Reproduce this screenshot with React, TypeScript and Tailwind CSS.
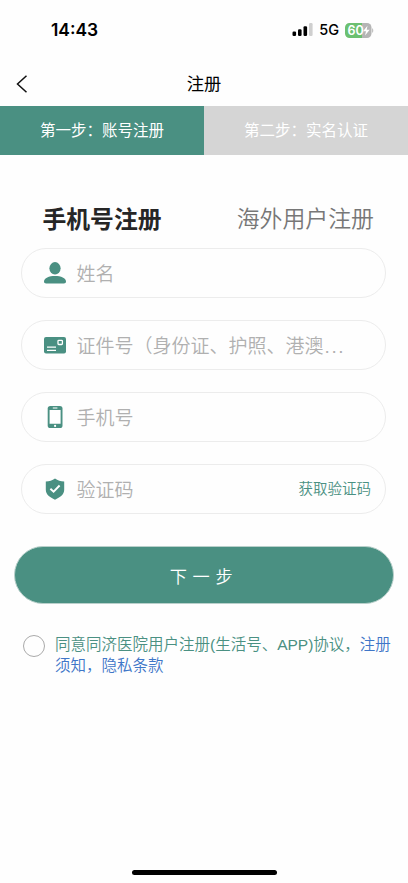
import React from 'react';

const UserIcon = () => (
  <svg width="22" height="22" viewBox="0 0 22 22" fill="#4a9082">
    <ellipse cx="11" cy="6.300" rx="5.600" ry="6.200" />
    <path d="M0 19.600C0 16 5 14 11 14s11 2 11 5.600c0 1.300-.7 2-2.200 2H2.200C.7 21.600 0 20.900 0 19.600Z" />
  </svg>
);

const CardIcon = () => (
  <svg width="22" height="22" viewBox="0 0 22 22" fill="none">
    <rect y="3" width="22" height="16.400" rx="2" fill="#4a9082" />
    <rect x="14" y="6.300" width="4.400" height="4.200" rx=".8" stroke="#fff" strokeWidth="1.300" />
    <path d="M3 13.200h9M3 16.300h9" stroke="#fff" strokeWidth="1.200" />
  </svg>
);

const PhoneIcon = () => (
  <svg width="22" height="22" viewBox="0 0 22 22" fill="none">
    <rect x="3.700" width="14.800" height="22" rx="2.600" fill="#4a9082" />
    <path d="M5.600 3.900h11v13.900h-11zM8.800 1.500h4.600v.9H8.800z" fill="#fff" />
    <circle cx="11.100" cy="19.900" r="1.100" fill="#fff" />
  </svg>
);

const ShieldIcon = () => (
  <svg width="22" height="22" viewBox="0 0 22 22" fill="none">
    <path
      d="M11 .4c2.700 1.900 5.600 2.900 9.200 3.100v8.300c0 4.800-4.200 7.700-9.200 9.900-5-2.200-9.200-5.100-9.200-9.900V3.500C5.400 3.300 8.300 2.300 11 .4Z"
      fill="#4a9082"
    />
    <path d="M6.400 10.700l3.200 3 6-6.200" stroke="#fff" strokeWidth="1.900" />
  </svg>
);

const fields = [
  { icon: <UserIcon />, label: '姓名' },
  { icon: <CardIcon />, label: '证件号（身份证、护照、港澳', more: true },
  { icon: <PhoneIcon />, label: '手机号' },
  { icon: <ShieldIcon />, label: '验证码', action: '获取验证码' },
];

function StatusBar() {
  return (
    <div className="flex h-[60px] items-center justify-between pr-[34px] pl-[51px] font-['Inter'] text-black">
      <span className="text-[17.400px] font-semibold">14:43</span>
      <div className="flex items-center">
        <svg width="21" height="14" viewBox="0 0 21 14">
          <rect x=".5" y="8.500" width="3.600" height="4.500" rx="1.200" />
          <rect x="6" y="6.300" width="3.600" height="6.700" rx="1.200" />
          <rect x="11.500" y="3.300" width="3.600" height="9.700" rx="1.200" />
          <rect x="17" y="0" width="3.600" height="13" rx="1.200" fill="#cfcfcf" />
        </svg>
        <span className="ml-[6px] text-[14.500px] font-medium">5G</span>
        <svg className="ml-[6px]" width="29" height="15" viewBox="0 0 29 15">
          <path d="M4.500 0H17v15H4.500A4.500 4.500 0 0 1 0 10.500v-6A4.500 4.500 0 0 1 4.500 0Z" fill="#6cc070" />
          <path d="M17 0h5a4.500 4.500 0 0 1 4.500 4.500v6A4.500 4.500 0 0 1 22 15h-5z" fill="#b5b5b5" />
          <path d="M27.200 5.200c1.400.6 1.400 4 0 4.600z" fill="#b5b5b5" />
          <text x="2.500" y="11.800" fill="#fff" fontSize="12.500" fontWeight="600">60</text>
          <path d="M22.500 2.800l-4.500 5.400h3l-1 4.200 4.700-5.600h-3z" fill="#fff" />
        </svg>
      </div>
    </div>
  );
}

export default function App() {
  return (
    <div className="flex h-[883px] w-[408px] flex-col bg-[#fefefe] font-['Liberation_Sans','Noto_Sans_CJK_SC',sans-serif]">
      <StatusBar />

      <header className="grid h-[46px] grid-cols-3 items-center px-4 pt-[2px]">
        <svg width="12" height="18" viewBox="0 0 12 18" fill="none" stroke="#111" strokeWidth="1.500">
          <path d="M10.500 .7L1.500 9l9 8.300" />
        </svg>
        <h1 className="pt-[2px] text-center text-[17.300px] text-black">注册</h1>
      </header>

      <div className="grid h-[49px] grid-cols-2 text-center text-[15.500px] leading-[50px] text-white">
        <div className="h-[49px] bg-[#4a9082]">第一步：账号注册</div>
        <div className="h-[49px] bg-[#d5d5d5]">第二步：实名认证</div>
      </div>

      <div className="mt-[46px] flex h-[36px] items-center justify-between pt-px pr-[34px] pl-[42.500px]">
        <span className="text-[23.800px] font-bold text-[#262626]">手机号注册</span>
        <span className="text-[22.900px] font-[350] text-[#777]">海外用户注册</span>
      </div>

      <div className="mr-[22px] ml-[21px] mt-[11px] flex flex-col gap-[22px]">
        {fields.map((f) => (
          <div
            key={f.label}
            className="flex h-[50px] items-center rounded-full border border-[#ececec] pr-[14px] pl-[22px]"
          >
            {f.icon}
            <span className="ml-[10.500px] pt-[4px] text-[19px] font-[350] whitespace-nowrap text-[#b0b0b0]">
              {f.label}
              {f.more && <span className="ml-[1px] tracking-[1.600px]">...</span>}
            </span>
            {f.action && (
              <span className="ml-auto pt-[2px] text-[14.500px] font-[350] text-[#4a9082]">{f.action}</span>
            )}
          </div>
        ))}
      </div>

      <button className="mx-[14px] mt-[32px] flex h-[58px] items-center justify-center rounded-full border border-[#b9d0cb] bg-[#4a9082] pt-[5px] text-[17.200px] font-[350] tracking-[5.600px] text-white">
        下一步
      </button>

      <div className="mt-[30px] flex pl-[23px]">
        <span className="mt-px size-[22px] shrink-0 rounded-full border border-[#aaa]" />
        <p className="mt-px ml-[10px] text-[15.500px] leading-[20.700px] font-[350] whitespace-nowrap text-[#4a9082]">
          同意同济医院用户注册(生活号、APP)协议，<span className="text-[#3f76c8]">注册</span>
          <br />
          <span className="text-[#3f76c8]">须知，隐私条款</span>
        </p>
      </div>

      <div className="mx-auto mt-auto mb-[8px] h-[5px] w-[145px] rounded-full bg-black" />
    </div>
  );
}
